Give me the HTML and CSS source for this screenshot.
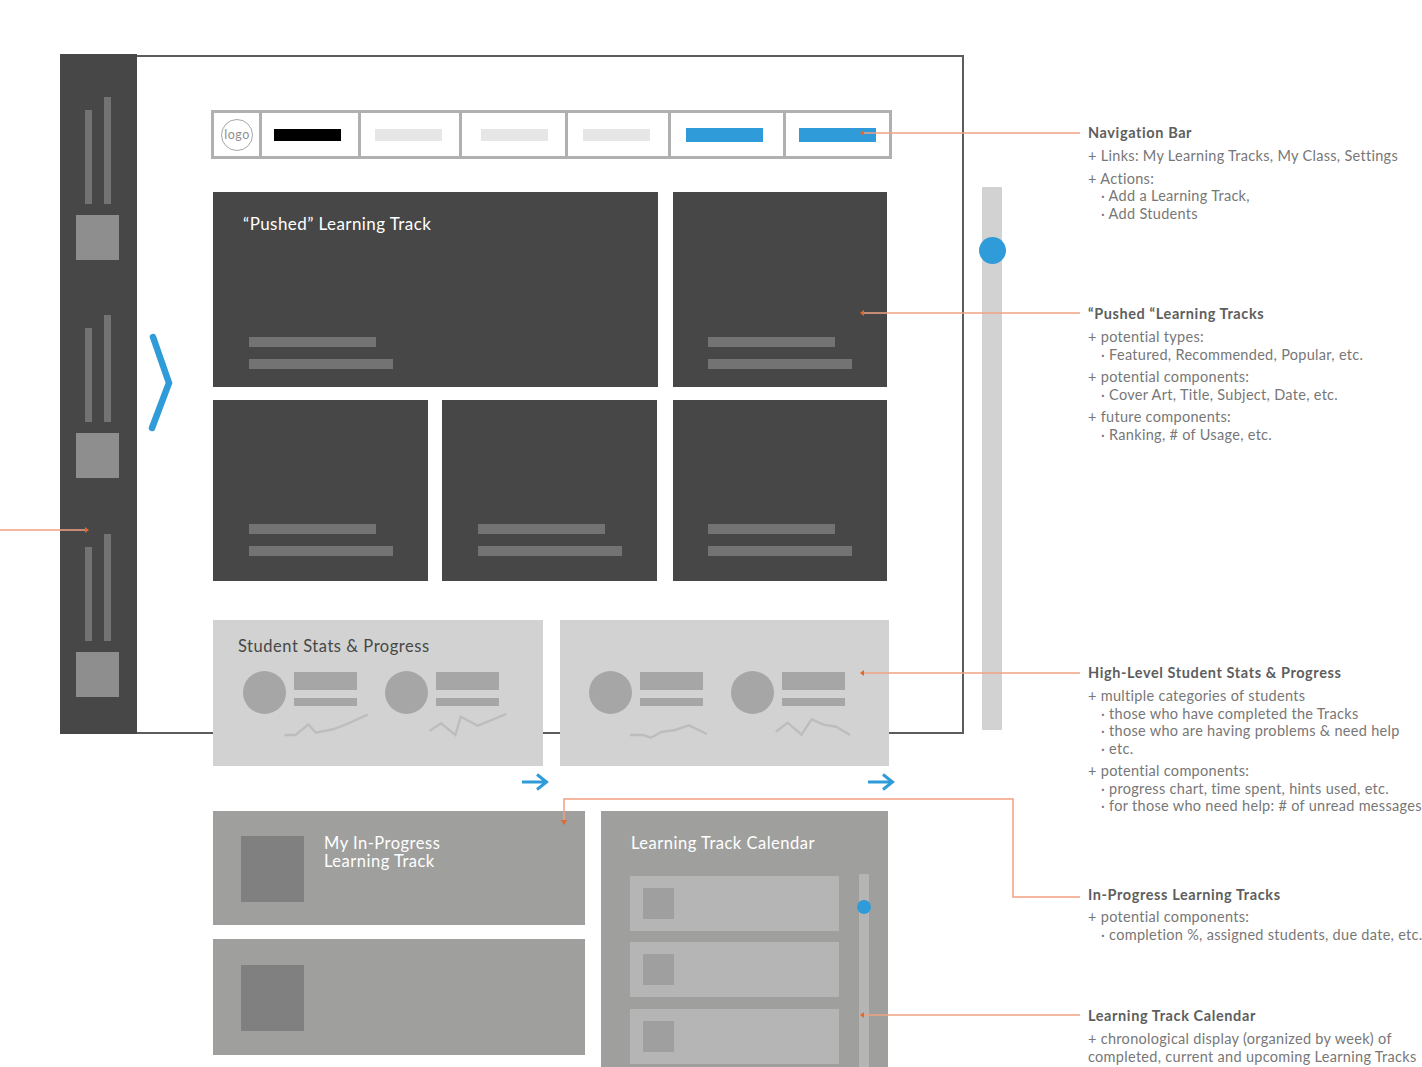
FILE: index.html
```html
<!DOCTYPE html>
<html lang="en">
<head>
<meta charset="utf-8">
<title>Wireframe</title>
<link rel="stylesheet" href="styles.css">
</head>
<body>
<div class="page">
  <div class="frame"></div>
  <aside class="sidebar">
    <div class="side-group"><div class="side-bars"><span class="side-bar"></span><span class="side-bar side-bar-tall"></span></div><div class="side-square"></div></div>
    <div class="side-group"><div class="side-bars"><span class="side-bar"></span><span class="side-bar side-bar-tall"></span></div><div class="side-square"></div></div>
    <div class="side-group"><div class="side-bars"><span class="side-bar"></span><span class="side-bar side-bar-tall"></span></div><div class="side-square"></div></div>
  </aside>
  <svg class="chevron" viewBox="0 0 30 100"><polyline points="6,4 22,50 5,95" fill="none" stroke="#2f9bd8" stroke-width="6.5" stroke-linecap="round" stroke-linejoin="miter"/></svg>

  <main class="content">
    <nav class="nav">
      <div class="nav-cell nav-logo"><span class="logo">logo</span></div>
      <div class="nav-cell nav-a"><span class="pill pill-black"></span></div>
      <div class="nav-cell nav-b"><span class="pill pill-grey"></span></div>
      <div class="nav-cell nav-c"><span class="pill pill-grey"></span></div>
      <div class="nav-cell nav-d"><span class="pill pill-grey"></span></div>
      <div class="nav-cell nav-e"><span class="pill pill-blue"></span></div>
      <div class="nav-cell nav-f"><span class="pill pill-blue"></span></div>
    </nav>

    <div class="track-row track-row-a">
      <section class="track track-wide"><h2 class="track-title">“Pushed” Learning Track</h2><div class="track-lines"><span class="line line-s"></span><span class="line line-l"></span></div></section>
      <section class="track track-side"><div class="track-lines"><span class="line line-s"></span><span class="line line-l"></span></div></section>
    </div>
    <div class="track-row track-row-b">
      <section class="track track-small"><div class="track-lines"><span class="line line-s"></span><span class="line line-l"></span></div></section>
      <section class="track track-small"><div class="track-lines"><span class="line line-s"></span><span class="line line-l"></span></div></section>
      <section class="track track-small track-shift"><div class="track-lines"><span class="line line-s"></span><span class="line line-l"></span></div></section>
    </div>

    <div class="stats-row">
      <section class="stats stats-titled">
        <h2 class="stats-title">Student Stats &amp; Progress</h2>
        <div class="people">
          <div class="person"><span class="avatar"></span><div class="person-bars"><span class="pbar pbar-a"></span><span class="pbar pbar-b"></span></div></div>
          <div class="person"><span class="avatar"></span><div class="person-bars"><span class="pbar pbar-a"></span><span class="pbar pbar-b"></span></div></div>
        </div>
        <svg class="spark" viewBox="213 620 330 146"><polyline points="284.5,735 295.5,735 308.4,724.3 315.7,732.7 333,729.3 347,724 367.6,714.7"/><polyline points="429.6,731 441,723.3 455.3,735 460.8,716.7 477.8,725.7 506.3,714"/></svg>
      </section>
      <section class="stats stats-plain">
        <div class="people">
          <div class="person"><span class="avatar"></span><div class="person-bars"><span class="pbar pbar-a"></span><span class="pbar pbar-b"></span></div></div>
          <div class="person"><span class="avatar"></span><div class="person-bars"><span class="pbar pbar-a"></span><span class="pbar pbar-b"></span></div></div>
        </div>
        <svg class="spark" viewBox="560 620 329 146"><polyline points="629.8,735 643,735 651,737.7 661.4,732 675,730 689,725.3 706.9,734"/><polyline points="775.8,731.7 787.7,722.7 801.5,734.7 811.6,719.3 823.5,724.7 836,726.7 850.1,735"/></svg>
      </section>
    </div>

    <div class="arrows">
      <svg class="arrow" viewBox="0 0 27 18"><path d="M0 9H24M15 1.5 24.5 9 15 16.5" fill="none" stroke="#2f9bd8" stroke-width="3"/></svg>
      <svg class="arrow" viewBox="0 0 27 18"><path d="M0 9H24M15 1.5 24.5 9 15 16.5" fill="none" stroke="#2f9bd8" stroke-width="3"/></svg>
    </div>

    <div class="lower">
      <div class="lower-left">
        <section class="progress">
          <span class="cover"></span>
          <h2 class="light-title">My In-Progress<br>Learning Track</h2>
        </section>
        <section class="progress progress-b">
          <span class="cover"></span>
        </section>
      </div>
      <section class="calendar">
        <h2 class="light-title cal-title">Learning Track Calendar</h2>
        <div class="cal-body">
          <div class="cal-rows">
            <div class="cal-row"><span class="cal-square"></span></div>
            <div class="cal-row"><span class="cal-square"></span></div>
            <div class="cal-row"><span class="cal-square"></span></div>
          </div>
          <div class="cal-scroll"><span class="cal-dot"></span></div>
        </div>
      </section>
    </div>
  </main>

  <div class="scrollbar"><span class="scroll-dot"></span></div>

  <svg class="callouts" viewBox="0 0 1422 1067">
    <g fill="none" stroke="#f2a081" stroke-width="1.5">
      <path d="M862 133H1080"/>
      <path d="M862 313H1080"/>
      <path d="M862 673H1080"/>
      <path d="M1080 897H1013V799H564V822"/>
      <path d="M862 1015H1080"/>
      <path d="M0 530H86"/>
    </g>
    <g fill="#e2682f">
      <path d="M860 133 864 130V136Z"/>
      <path d="M860 313 864 310V316Z"/>
      <path d="M860 673 864 670V676Z"/>
      <path d="M860 1015 864 1012V1018Z"/>
      <path d="M564 825 561 820H567Z"/>
      <path d="M89 530 85 527V533Z"/>
    </g>
  </svg>

  <aside class="note note-nav">
    <h3 class="note-title">Navigation Bar</h3>
    <p class="note-item">+ Links: My Learning Tracks, My Class, Settings</p>
    <p class="note-item">+ Actions:</p>
    <p class="note-sub">· Add a Learning Track,</p>
    <p class="note-sub">· Add Students</p>
  </aside>
  <aside class="note note-pushed">
    <h3 class="note-title">“Pushed “Learning Tracks</h3>
    <p class="note-item">+ potential types:</p>
    <p class="note-sub">· Featured, Recommended, Popular, etc.</p>
    <p class="note-item">+ potential components:</p>
    <p class="note-sub">· Cover Art, Title, Subject, Date, etc.</p>
    <p class="note-item">+ future components:</p>
    <p class="note-sub">· Ranking, # of Usage, etc.</p>
  </aside>
  <aside class="note note-stats">
    <h3 class="note-title">High-Level Student Stats &amp; Progress</h3>
    <p class="note-item">+ multiple categories of students</p>
    <p class="note-sub">· those who have completed the Tracks</p>
    <p class="note-sub">· those who are having problems &amp; need help</p>
    <p class="note-sub">· etc.</p>
    <p class="note-item">+ potential components:</p>
    <p class="note-sub">· progress chart, time spent, hints used, etc.</p>
    <p class="note-sub">· for those who need help: # of unread messages</p>
  </aside>
  <aside class="note note-progress">
    <h3 class="note-title">In-Progress Learning Tracks</h3>
    <p class="note-item">+ potential components:</p>
    <p class="note-sub">· completion %, assigned students, due date, etc.</p>
  </aside>
  <aside class="note note-calendar">
    <h3 class="note-title">Learning Track Calendar</h3>
    <p class="note-item">+ chronological display (organized by week) of</p>
    <p class="note-sub note-flush">completed, current and upcoming Learning Tracks</p>
  </aside>
</div>
</body>
</html>
```
FILE: styles.css
```css
* { box-sizing: border-box; }
html, body { margin: 0; padding: 0; background: #fff; }
body { font-family: "Lato", "Noto Sans", sans-serif; }
.page { position: relative; width: 1422px; height: 1067px; overflow: hidden; background: #fff; }

/* free-canvas pieces of the annotated wireframe */
.frame { position: absolute; left: 130px; top: 55px; width: 834px; height: 679px; border: 2px solid #5c5c5c; }
.sidebar { position: absolute; left: 60px; top: 54px; width: 77px; height: 680px; background: #474747; padding: 42.75px 0 0 16px; display: flex; flex-direction: column; gap: 55.5px; }
.side-group { display: flex; flex-direction: column; gap: 11px; height: 163px; }
.side-bars { display: flex; align-items: flex-end; gap: 12px; padding-left: 9px; }
.side-bar { display: block; width: 7px; height: 94px; background: #737373; }
.side-bar-tall { height: 107px; }
.side-square { width: 43px; height: 45px; background: #8e8e8e; }
.chevron { position: absolute; left: 147px; top: 333px; width: 30px; height: 100px; }

.content { position: absolute; left: 211px; top: 110px; width: 690px; display: flex; flex-direction: column; }

.nav { display: flex; width: 681px; height: 49px; border: 3px solid #b0b0b0; }
.nav-cell { display: flex; align-items: center; border-right: 3px solid #b0b0b0; flex: none; }
.nav-logo { width: 48px; padding-left: 7px; }
.nav-a { width: 99px; padding-left: 12px; }
.nav-b { width: 101px; padding-left: 14px; }
.nav-c { width: 106px; padding-left: 19px; }
.nav-d { width: 103px; padding-left: 15px; }
.nav-e { width: 115px; padding-left: 15px; }
.nav-f { flex: 1; border-right: 0; padding-left: 13px; }
.logo { width: 32px; height: 32px; border: 1px solid #a8a8a8; border-radius: 50%; display: flex; align-items: center; justify-content: center; font-size: 12.5px; letter-spacing: .5px; color: #8f8f8f; }
.pill { display: block; height: 12px; width: 67px; }
.pill-black { background: #000; }
.pill-grey { background: #e6e6e6; }
.pill-blue { background: #2f9bd8; width: 77px; height: 14px; }

.track-row { display: flex; margin-left: 2px; }
.track-row-a { margin-top: 33px; gap: 15px; height: 195px; }
.track-row-b { margin-top: 13px; gap: 14px; height: 181px; }
.track { background: #474747; display: flex; flex-direction: column; position: relative; }
.track-wide { width: 445px; padding: 0 0 18px 36px; }
.track-side { width: 214px; padding: 0 0 18px 35px; }
.track-small { width: 215px; padding: 0 0 25px 36px; }
.track-shift { margin-left: 2px; width: 214px; padding-left: 35px; }
.track-title { margin: 21px 0 0 -6px; font-size: 17px; line-height: 22px; font-weight: 400; letter-spacing: .43px; color: #fff; }
.track-lines { margin-top: auto; display: flex; flex-direction: column; gap: 12px; }
.line { display: block; height: 10px; background: #737373; }
.line-s { width: 127px; }
.line-l { width: 144px; }

.stats-row { display: flex; gap: 17px; margin: 39px 0 0 2px; }
.stats { position: relative; width: 330px; height: 146px; background: #d2d2d2; }
.stats-titled { padding: 15px 0 0 30px; }
.stats-plain { width: 329px; padding: 51px 0 0 29px; }
.stats-title { margin: 0 0 14px -5px; font-size: 16.5px; line-height: 22px; font-weight: 400; letter-spacing: .54px; color: #474747; }
.people { display: flex; gap: 28px; }
.person { display: flex; gap: 8px; }
.avatar { display: block; width: 43px; height: 43px; border-radius: 50%; background: #a6a6a6; }
.person-bars { display: flex; flex-direction: column; gap: 8px; padding-top: 1px; }
.pbar { display: block; width: 63px; background: #a6a6a6; }
.pbar-a { height: 18px; }
.pbar-b { height: 8px; }
.spark { position: absolute; inset: 0; width: 100%; height: 100%; }
.spark polyline { fill: none; stroke: #bdbdbd; stroke-width: 2.4; }

.arrows { display: flex; height: 45px; padding: 7px 0 0 311px; gap: 319px; }
.arrow { display: block; width: 27px; height: 18px; }

.lower { display: flex; gap: 16px; margin-left: 2px; }
.lower-left { display: flex; flex-direction: column; gap: 14px; }
.progress { width: 372px; height: 114px; background: #9f9f9e; display: flex; gap: 20px; padding: 25px 0 0 28px; }
.progress-b { height: 116px; padding-top: 26px; }
.cover { display: block; width: 63px; height: 66px; background: #808080; }
.light-title { margin: 0; font-size: 16.5px; line-height: 18px; font-weight: 400; letter-spacing: .5px; color: #fff; }
.progress .light-title { margin-top: -2px; }
.calendar { width: 287px; height: 270px; background: #9f9f9e; padding: 23px 0 0 29px; }
.cal-title { margin-left: 1px; }
.cal-body { display: flex; gap: 20px; margin-top: 22px; }
.cal-rows { display: flex; flex-direction: column; gap: 11px; padding-top: 2px; }
.cal-row { width: 209px; height: 55px; background: #b5b5b5; padding: 12px 0 0 13px; flex: none; }
.cal-row:last-child { margin-top: 1px; }
.cal-square { display: block; width: 31px; height: 31px; background: #9f9f9f; }
.cal-scroll { position: relative; width: 10px; height: 200px; background: #b5b5b5; }
.cal-dot { position: absolute; left: -2px; top: 26px; width: 14px; height: 14px; border-radius: 50%; background: #2f9bd8; }

.scrollbar { position: absolute; left: 982px; top: 187px; width: 20px; height: 543px; background: #d2d2d2; }
.scroll-dot { position: absolute; left: -3px; top: 50px; width: 27px; height: 27px; border-radius: 50%; background: #2f9bd8; }

.callouts { position: absolute; inset: 0; width: 1422px; height: 1067px; pointer-events: none; }

.note { position: absolute; left: 1088px; width: 340px; color: #777; font-size: 14.5px; line-height: 17.5px; white-space: nowrap; letter-spacing: .3px; }
.note-title { margin: 0; font-size: 14.5px; line-height: 18px; font-weight: 700; letter-spacing: .6px; color: #5e5e5e; }
.note-item { margin: 5px 0 0; }
.note-sub { margin: 0; padding-left: 13px; }
.note-flush { padding-left: 0; }
.note-nav { top: 124px; }
.note-pushed { top: 305px; }
.note-stats { top: 664px; }
.note-progress { top: 886px; }
.note-progress .note-item { margin-top: 4px; }
.note-calendar { top: 1007px; }
```
